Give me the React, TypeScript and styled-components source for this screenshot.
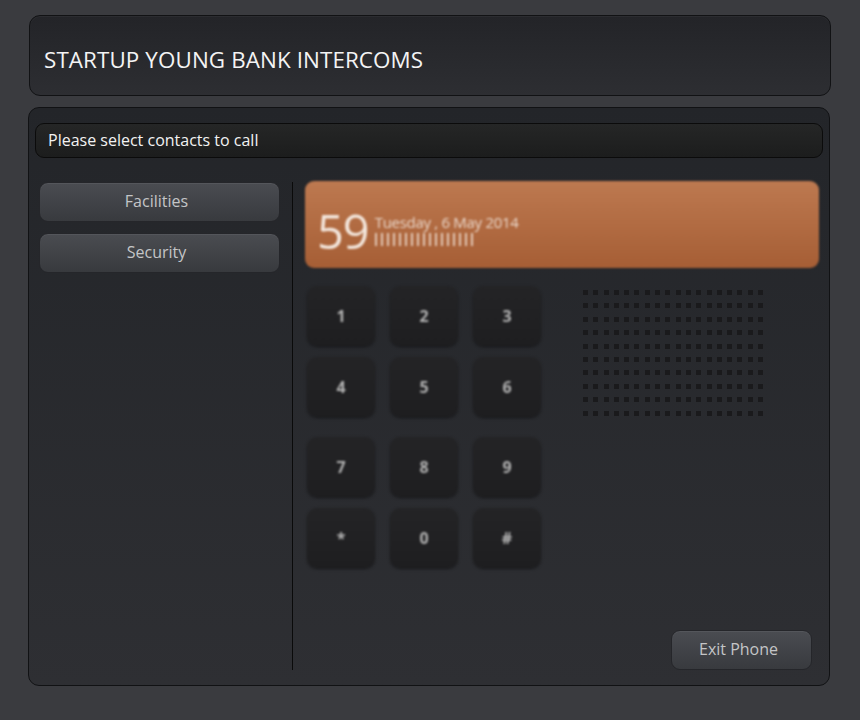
import React from "react";
import styled, { createGlobalStyle } from "styled-components";

const Global = createGlobalStyle`
  html, body { margin: 0; padding: 0; background: #3a3b3f; }
  body { font-family: "Open Sans", "Noto Sans", sans-serif; }
  * { box-sizing: border-box; }
`;

const Page = styled.div`
  width: 860px;
  height: 720px;
  padding: 15px 29px 0 29px;
  background: #3a3b3f;
  display: flex;
  flex-direction: column;
  gap: 11px;
`;

const Header = styled.header`
  height: 81px;
  border: 1px solid #111214;
  border-radius: 11px;
  background: linear-gradient(#232428, #2d2e32);
  display: flex;
  align-items: center;
  padding: 7px 14px 0 14px;
  box-shadow: inset 0 1px 0 rgba(255, 255, 255, 0.04);
`;

const Title = styled.h1`
  margin: 0;
  color: #f4f4f4;
  font-size: 22.4px;
  font-weight: 400;
  letter-spacing: 0.1px;
`;

const Panel = styled.main`
  height: 579px;
  margin-left: -1px;
  margin-right: 1px;
  border: 1px solid #111214;
  border-radius: 11px;
  background: linear-gradient(#232529, #2e2f33);
  padding: 15px 6px 15px 6px;
  display: flex;
  flex-direction: column;
`;

const Prompt = styled.div`
  height: 35px;
  border: 1px solid #0b0b0b;
  border-radius: 9px;
  background: linear-gradient(#252626, #1c1d1d);
  color: #f2f2f2;
  font-size: 16px;
  display: flex;
  align-items: center;
  padding: 0 12px 1px 12px;
`;

const Body = styled.div`
  flex: 1;
  margin-top: 23px;
  display: flex;
  padding: 0 4px 0 4px;
`;

const Contacts = styled.nav`
  width: 241px;
  display: flex;
  flex-direction: column;
  gap: 11px;
  padding-top: 1px;
`;

const GreyButton = styled.button<{ $w?: number }>`
  height: 40px;
  width: ${(p) => (p.$w ? `${p.$w}px` : "100%")};
  border: 1px solid #25262a;
  border-radius: 9px;
  background: linear-gradient(#4a4c51, #383a3e);
  box-shadow: inset 0 1px 0 rgba(255, 255, 255, 0.06);
  color: #c4c5c7;
  font-family: "Open Sans", "Noto Sans", sans-serif;
  font-size: 16px;
  padding: 0 6px 2px 0;
  cursor: pointer;
`;

const Divider = styled.div`
  width: 1px;
  margin: 1px 0 0 12px;
  background: #0a0a0a;
`;

const Phone = styled.section`
  width: 514px;
  margin-left: 12px;
  display: flex;
  flex-direction: column;
`;

const Banner = styled.div`
  height: 87px;
  border-radius: 9px;
  background: linear-gradient(#bd7950, #a65e35);
  filter: blur(1.2px);
  display: flex;
  align-items: center;
  padding: 13px 0 0 12px;
  color: #f3e6dc;
`;

const BigNum = styled.div`
  font-size: 47px;
  line-height: 1;
  letter-spacing: -1px;
  margin-right: 6px;
`;

const DateCol = styled.div`
  display: flex;
  flex-direction: column;
  gap: 2px;
  padding-bottom: 4px;
`;

const DateText = styled.div`
  font-size: 15px;
  line-height: 18px;
  letter-spacing: -0.3px;
  color: #ead7ca;
`;

const Bars = styled.div`
  width: 102px;
  height: 13px;
  background: repeating-linear-gradient(
    90deg,
    #e2c7b5 0px,
    #e2c7b5 2px,
    transparent 2px,
    transparent 6px
  );
`;

const Lower = styled.div`
  display: flex;
  margin-top: 18px;
  padding-left: 2px;
`;

const Keypad = styled.div`
  display: flex;
  flex-direction: column;
  gap: 20px;
  filter: blur(1px);
`;

const KeyGroup = styled.div`
  display: grid;
  grid-template-columns: repeat(3, 68px);
  grid-auto-rows: 60px;
  column-gap: 15px;
  row-gap: 11px;
`;

const Key = styled.div`
  border-radius: 10px;
  background: linear-gradient(#242426, #1e1e20);
  box-shadow: 0 1px 2px rgba(0, 0, 0, 0.5);
  color: #b2b2b2;
  font-size: 16px;
  font-weight: 700;
  display: flex;
  align-items: center;
  justify-content: center;
`;

const Speaker = styled.div`
  margin: 4px 0 0 42px;
  display: grid;
  grid-template-columns: repeat(18, 5px);
  column-gap: 5.3px;
  row-gap: 8.4px;
  align-content: start;
  filter: blur(0.7px);
`;

const Dot = styled.div`
  width: 5px;
  height: 5px;
  background: #1a1a1c;
`;

const Footer = styled.div`
  margin-top: auto;
  display: flex;
  justify-content: flex-end;
  padding-right: 7px;
`;

const groups = [
  ["1", "2", "3", "4", "5", "6"],
  ["7", "8", "9", "*", "0", "#"],
];

export default function App() {
  return (
    <>
      <Global />
      <Page>
        <Header>
          <Title>STARTUP YOUNG BANK INTERCOMS</Title>
        </Header>
        <Panel>
          <Prompt>Please select contacts to call</Prompt>
          <Body>
            <Contacts>
              <GreyButton>Facilities</GreyButton>
              <GreyButton>Security</GreyButton>
            </Contacts>
            <Divider />
            <Phone>
              <Banner>
                <BigNum>59</BigNum>
                <DateCol>
                  <DateText>Tuesday , 6 May 2014</DateText>
                  <Bars />
                </DateCol>
              </Banner>
              <Lower>
                <Keypad>
                  {groups.map((g, i) => (
                    <KeyGroup key={i}>
                      {g.map((k) => (
                        <Key key={k}>{k}</Key>
                      ))}
                    </KeyGroup>
                  ))}
                </Keypad>
                <Speaker>
                  {Array.from({ length: 180 }).map((_, i) => (
                    <Dot key={i} />
                  ))}
                </Speaker>
              </Lower>
              <Footer>
                <GreyButton $w={141}>Exit Phone</GreyButton>
              </Footer>
            </Phone>
          </Body>
        </Panel>
      </Page>
    </>
  );
}
